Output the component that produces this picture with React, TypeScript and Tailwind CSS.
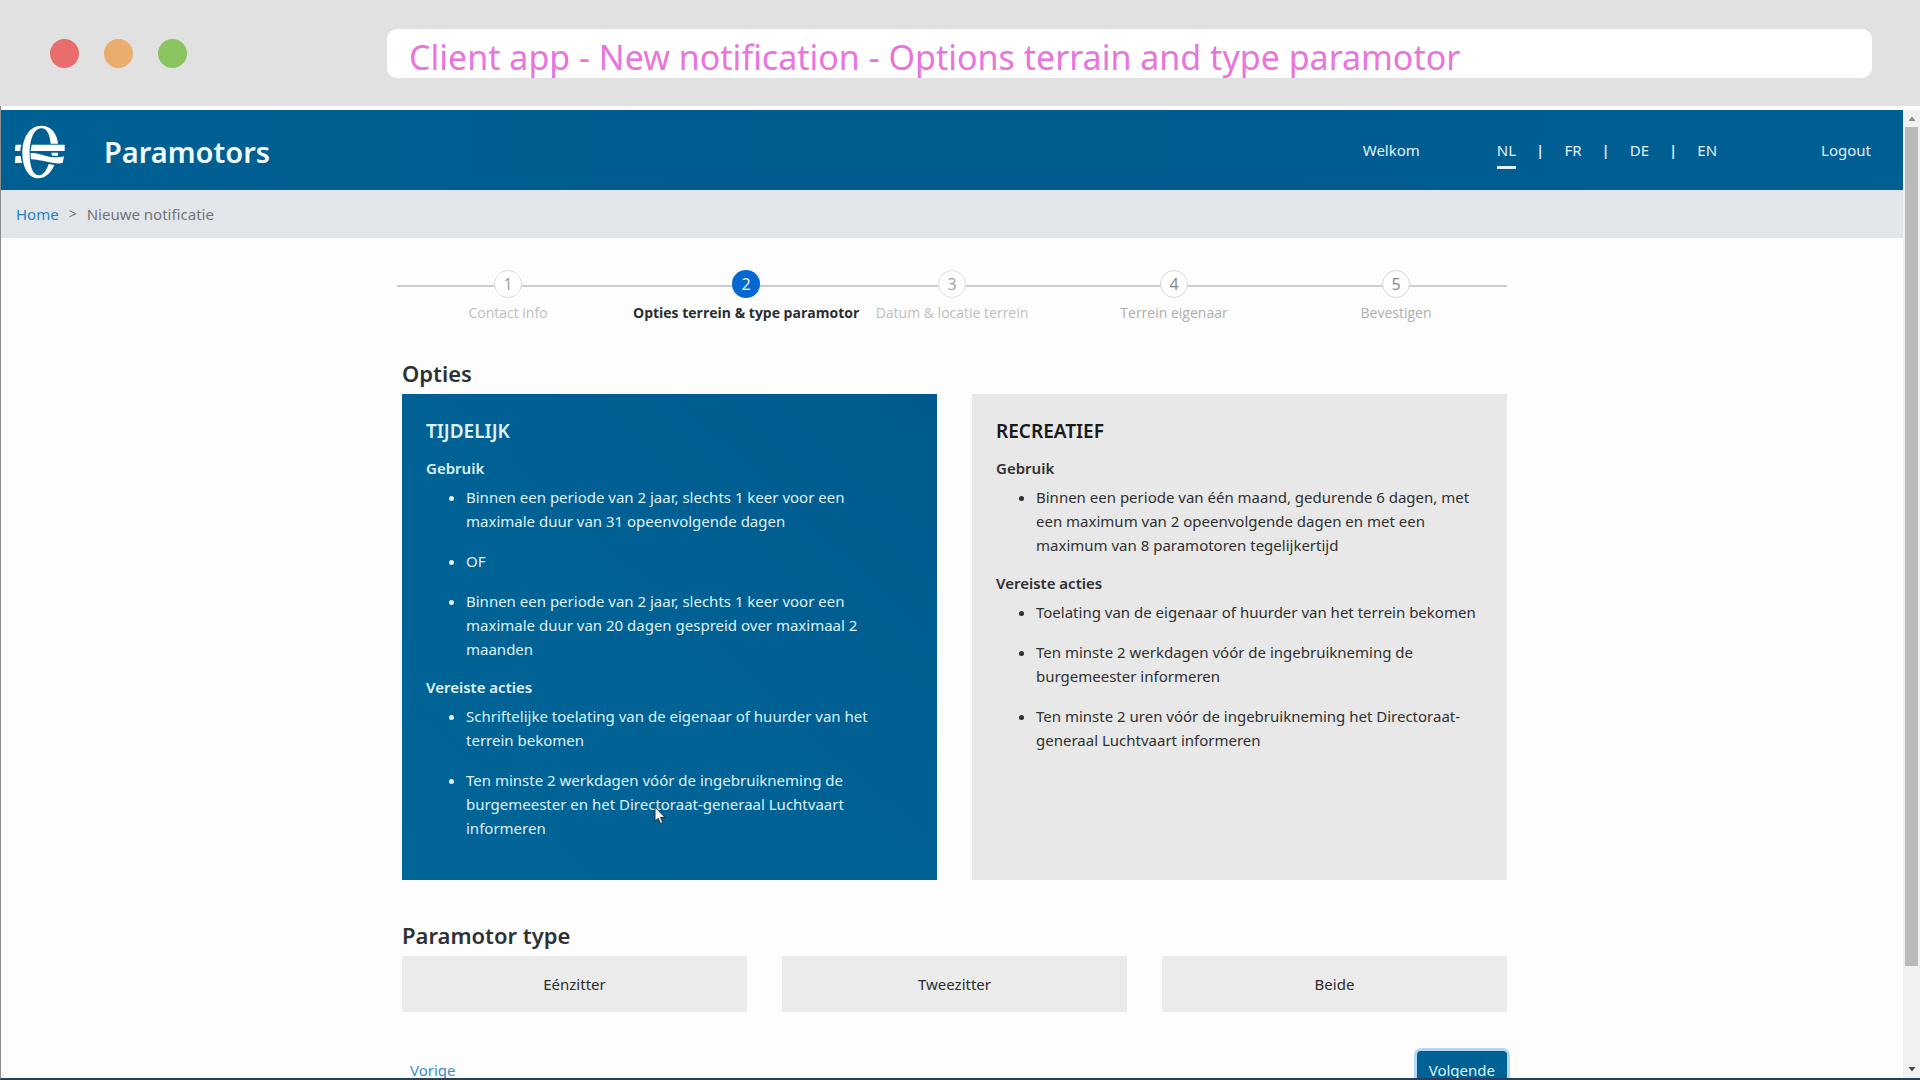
import { useState, type ReactNode } from "react";

const LANGUAGES = ["NL", "FR", "DE", "EN"];

const STEPS = [
  "Contact info",
  "Opties terrein & type paramotor",
  "Datum & locatie terrein",
  "Terrein eigenaar",
  "Bevestigen",
];

const OPTIONS = [
  {
    id: "tijdelijk",
    title: "TIJDELIJK",
    usage: [
      "Binnen een periode van 2 jaar, slechts 1 keer voor een maximale duur van 31 opeenvolgende dagen",
      "OF",
      "Binnen een periode van 2 jaar, slechts 1 keer voor een maximale duur van 20 dagen gespreid over maximaal 2 maanden",
    ],
    actions: [
      "Schriftelijke toelating van de eigenaar of huurder van het terrein bekomen",
      "Ten minste 2 werkdagen vóór de ingebruikneming de burgemeester en het Directoraat-generaal Luchtvaart informeren",
    ],
  },
  {
    id: "recreatief",
    title: "RECREATIEF",
    usage: [
      "Binnen een periode van één maand, gedurende 6 dagen, met een maximum van 2 opeenvolgende dagen en met een maximum van 8 paramotoren tegelijkertijd",
    ],
    actions: [
      "Toelating van de eigenaar of huurder van het terrein bekomen",
      "Ten minste 2 werkdagen vóór de ingebruikneming de burgemeester informeren",
      "Ten minste 2 uren vóór de ingebruikneming het Directoraat-generaal Luchtvaart informeren",
    ],
  },
];

function BrowserBar() {
  return (
    <div className="flex h-[106px] shrink-0 items-center bg-[#e1e1e1] pr-12 pl-[50px]">
      <div className="flex shrink-0 gap-[25px]">
        <span className="size-[29px] rounded-full bg-[#ea6d6d]" />
        <span className="size-[29px] rounded-full bg-[#e9ae6c]" />
        <span className="size-[29px] rounded-full bg-[#8ac45f]" />
      </div>
      <input
        type="text"
        aria-label="Address"
        defaultValue="Client app - New notification - Options terrain and type paramotor"
        className="ml-[200px] h-[49px] min-w-0 flex-1 rounded-[10px] bg-white px-[22px] pt-[9px] text-[34px] text-[#e874dc] outline-none"
      />
    </div>
  );
}

function Logo() {
  return (
    <svg viewBox="0 0 180 210" className="h-[70px] w-[60px] shrink-0" fill="#fff" aria-hidden="true">
      <path d="M95 26C58 26 37 62 37 108C37 152 56 184 85 184C107 184 124 166 133 144L116 141C109 161 99 175 87 175C69 175 59 148 59 110C59 66 72 34 95 34C112 34 120 56 122 80L144 80C142 50 123 26 95 26Z" />
      <path d="M17 83H34Q31 92 31 102H15V94Z" />
      <path d="M17 117H32Q33 127 36 138H15V128Z" />
      <path d="M65 83H164V102H62Q63 92 65 83Z" />
      <path d="M62 108C86 106 110 121 136 121C146 121 154 120 162 118L158 138C132 144 104 129 63 127Q61 118 62 108Z" />
      <path d="M124 107H144V116H126Z" />
    </svg>
  );
}

function Header() {
  const [language, setLanguage] = useState("NL");
  return (
    <header className="flex h-20 items-center bg-linear-to-r from-[#006093] via-[#005b8f] to-[#005f93] pr-8 pl-[9px] text-[15px] text-[#e0f1f8]">
      <div className="flex items-center gap-[34px] pt-[3px]">
        <Logo />
        <h1 className="text-[29px] font-semibold text-[#f0fafd]">Paramotors</h1>
      </div>
      <nav className="ml-auto flex items-center">
        <span>Welkom</span>
        <div className="ml-[77px] flex items-center gap-5">
          {LANGUAGES.map((code, i) => (
            <div key={code} className="flex items-center gap-5">
              {i > 0 && <span className="font-semibold">|</span>}
              <button
                type="button"
                onClick={() => setLanguage(code)}
                className={
                  code === language
                    ? "mt-2 border-b-[3px] border-[#e0f1f8] pb-1"
                    : "mt-2 border-b-[3px] border-transparent pb-1"
                }
              >
                {code}
              </button>
            </div>
          ))}
        </div>
        <a href="#logout" className="ml-[104px]">
          Logout
        </a>
      </nav>
    </header>
  );
}

function Breadcrumb() {
  return (
    <nav aria-label="Breadcrumb" className="h-12 bg-[#e2e6ea] px-[15px] text-[15px] text-[#70757a]">
      <ol className="flex h-full items-center gap-[10px]">
        <li>
          <a href="#home" className="text-[#2b7fbb]">
            Home
          </a>
        </li>
        <li aria-hidden="true" className="text-sm">
          &gt;
        </li>
        <li>Nieuwe notificatie</li>
      </ol>
    </nav>
  );
}

function Stepper() {
  return (
    <ol className="relative flex font-['Open_Sans',sans-serif] text-sm before:absolute before:inset-x-0 before:top-[15px] before:h-[2px] before:bg-[#cccccc]">
      {STEPS.map((label, i) => {
        const active = i === 1;
        return (
          <li key={label} className="relative min-w-0 flex-1 basis-0 px-[14px]">
            <div className="flex w-max min-w-full flex-col items-center gap-[5px]">
              <span
                className={
                  active
                    ? "flex size-7 items-center justify-center rounded-full bg-[#0468d0] text-base text-white"
                    : i > 2
                      ? "flex size-7 items-center justify-center rounded-full border border-[#d8d8d8] bg-white text-base text-[#868686]"
                      : "flex size-7 items-center justify-center rounded-full border border-[#dddddd] bg-white text-base text-[#a0a0a0]"
                }
              >
                {i + 1}
              </span>
              <span
                className={
                  active
                    ? "leading-5 font-bold text-[#2b2d30]"
                    : i > 2
                      ? "leading-5 text-[#aeaeae]"
                      : "leading-5 text-[#bdbdbd]"
                }
              >
                {label}
              </span>
            </div>
          </li>
        );
      })}
    </ol>
  );
}

function BulletList({ items }: { items: string[] }) {
  return (
    <ul className="mt-[5px] flex list-disc flex-col gap-4 pl-10 leading-6">
      {items.map((item) => (
        <li key={item}>{item}</li>
      ))}
    </ul>
  );
}

function SectionTitle({ children }: { children: ReactNode }) {
  return <h2 className="mb-[5px] text-[22px] leading-8 font-semibold text-[#2e3235]">{children}</h2>;
}

function Pointer() {
  return (
    <svg viewBox="0 0 12 19" className="absolute top-[412px] left-[252px] h-[19px] w-3" aria-hidden="true">
      <path
        d="M1 1V15.2L4.2 12.3L6.5 17.6L8.8 16.6L6.5 11.5H11Z"
        fill="#fff"
        stroke="#1b2f40"
        strokeWidth="1"
      />
    </svg>
  );
}

function Options() {
  const [selected, setSelected] = useState("tijdelijk");
  return (
    <div className="flex gap-[35px]">
      {OPTIONS.map((option) => (
        <label
          key={option.id}
          className={
            option.id === selected
              ? "relative min-w-0 flex-1 bg-linear-to-tr from-[#006598] via-[#006194] to-[#005a8e] px-6 pt-[23px] pb-10 text-[15px] text-[#dff2f8]"
              : "relative min-w-0 flex-1 bg-[#e8e8e8] px-6 pt-[23px] pb-10 text-[15px] text-[#303030]"
          }
        >
          <input
            type="radio"
            name="option"
            value={option.id}
            checked={option.id === selected}
            onChange={() => setSelected(option.id)}
            className="sr-only"
          />
          <h3
            className={
              option.id === selected
                ? "text-[19px] leading-7 font-semibold text-[#dff2f8]"
                : "text-[19px] leading-7 font-semibold text-[#17191b]"
            }
          >
            {option.title}
          </h3>
          <h4 className="mt-[11px] leading-6 font-semibold">Gebruik</h4>
          <BulletList items={option.usage} />
          <h4 className="mt-[14px] leading-6 font-semibold">Vereiste acties</h4>
          <BulletList items={option.actions} />
          {option.id === "tijdelijk" && <Pointer />}
        </label>
      ))}
    </div>
  );
}

function Scrollbar() {
  return (
    <div aria-hidden="true" className="flex w-[17px] shrink-0 flex-col items-center bg-[#f1f1f1]">
      <svg viewBox="0 0 12 17" className="h-[17px] w-3 shrink-0">
        <path d="M2.5 11L6 6.5L9.5 11Z" fill="#8b8b8b" />
      </svg>
      <div className="w-[13px] flex-[840] bg-[#bababa]" />
      <div className="flex-[95]" />
      <svg viewBox="0 0 12 17" className="h-[17px] w-3 shrink-0">
        <path d="M2.5 6L6 10.5L9.5 6Z" fill="#4a4a4a" />
      </svg>
    </div>
  );
}

export default function App() {
  return (
    <div className="flex h-screen flex-col overflow-hidden bg-[#fdfdfd] font-['Noto_Sans',sans-serif]">
      <BrowserBar />
      <div className="flex min-h-0 flex-1 border-b-2 border-l border-b-[#24405a] border-l-[#8c8c8c] pt-1">
        <div className="min-w-0 flex-1 overflow-hidden">
          <Header />
          <Breadcrumb />
          <main className="mx-auto max-w-[1110px] pt-8">
            <Stepper />
            <div className="mt-[34px] pl-[5px]">
              <SectionTitle>Opties</SectionTitle>
              <Options />
              <div className="mt-[39px]">
                <SectionTitle>Paramotor type</SectionTitle>
                <div className="flex gap-[35px]">
                  {["Eénzitter", "Tweezitter", "Beide"].map((type) => (
                    <button
                      key={type}
                      type="button"
                      className="h-14 flex-1 bg-[#ebebeb] text-[15px] text-[#2c2c2c]"
                    >
                      {type}
                    </button>
                  ))}
                </div>
              </div>
              <div className="mt-[39px] flex items-center justify-between text-[15px]">
                <a href="#vorige" className="ml-2 text-[#3a8bd0]">
                  Vorige
                </a>
                <button
                  type="button"
                  className="h-[38px] rounded bg-[#006194] px-3 text-[#dff2f8] ring-3 ring-[#b4d8f3]"
                >
                  Volgende
                </button>
              </div>
            </div>
          </main>
        </div>
        <Scrollbar />
      </div>
    </div>
  );
}
